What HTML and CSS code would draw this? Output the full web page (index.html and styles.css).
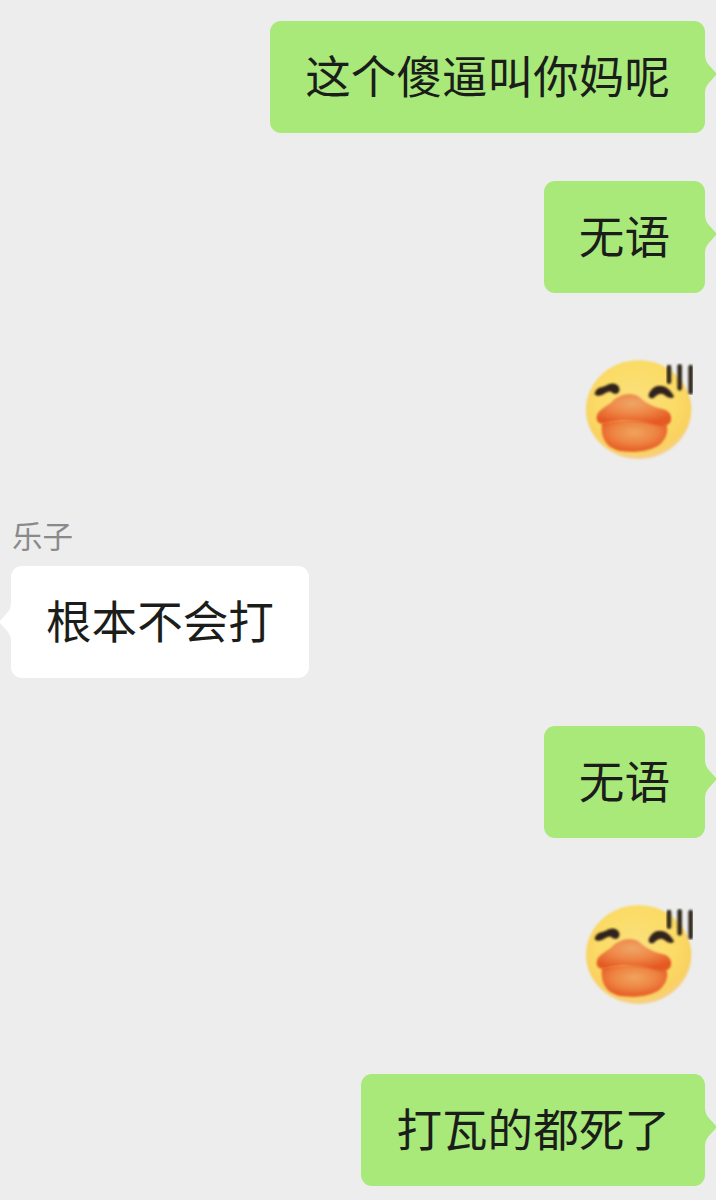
FILE: index.html
```html
<!DOCTYPE html>
<html lang="zh-CN">
<head>
<meta charset="utf-8">
<title>聊天</title>
<link rel="stylesheet" href="styles.css">
</head>
<body>
<main class="chat">
  <div class="row row-out"><div class="bubble bubble-out">这个傻逼叫你妈呢</div></div>
  <div class="row row-out gap-48"><div class="bubble bubble-out">无语</div></div>
  <div class="row row-out gap-52">
    <svg class="duck" viewBox="0 0 420 375" aria-hidden="true"><use href="#duck-face"/></svg>
  </div>
  <div class="name">乐子</div>
  <div class="row row-in"><div class="bubble bubble-in">根本不会打</div></div>
  <div class="row row-out gap-48"><div class="bubble bubble-out">无语</div></div>
  <div class="row row-out gap-52">
    <svg class="duck" viewBox="0 0 420 375" aria-hidden="true"><use href="#duck-face"/></svg>
  </div>
  <div class="row row-out gap-59"><div class="bubble bubble-out">打瓦的都死了</div></div>
</main>

<svg class="defs" width="0" height="0" aria-hidden="true">
  <defs>
    <radialGradient id="face" cx="48%" cy="40%" r="60%">
      <stop offset="0" stop-color="#fbe07c"/>
      <stop offset="0.6" stop-color="#fbdc66"/>
      <stop offset="0.88" stop-color="#f9d160"/>
      <stop offset="1" stop-color="#f6d08e"/>
    </radialGradient>
    <radialGradient id="upper" cx="48%" cy="30%" r="65%">
      <stop offset="0" stop-color="#efa668"/>
      <stop offset="0.5" stop-color="#ee8746"/>
      <stop offset="1" stop-color="#e55a24"/>
    </radialGradient>
    <radialGradient id="lower" cx="50%" cy="40%" r="60%">
      <stop offset="0" stop-color="#f0a45e"/>
      <stop offset="0.55" stop-color="#ee8442"/>
      <stop offset="1" stop-color="#e55a24"/>
    </radialGradient>
    <filter id="soft" x="-10%" y="-10%" width="120%" height="120%"><feGaussianBlur stdDeviation="2.4"/></filter>
    <filter id="softer" x="-10%" y="-10%" width="120%" height="120%"><feGaussianBlur stdDeviation="3.5"/></filter>
    <g id="duck-face">
      <ellipse cx="206" cy="194" rx="158" ry="148" fill="url(#face)" filter="url(#softer)"/>
      <path d="M96 234 C90 276 108 310 152 318 C196 324 248 318 272 296 C292 278 296 254 288 234 C240 222 150 222 96 234Z" fill="url(#lower)" filter="url(#soft)"/>
      <path d="M80 216 C82 194 108 186 126 170 C146 150 180 138 208 156 C228 174 250 186 278 192 C298 196 308 214 302 230 C296 244 270 244 244 236 C206 226 150 224 120 232 C100 240 78 238 80 216Z" fill="url(#upper)" filter="url(#soft)"/>
      <path d="M76 140 C84 124 102 128 116 118 C132 110 152 120 148 138 C142 152 130 146 122 140 C110 138 96 156 82 152 C74 150 72 146 76 140Z" fill="#33241a" filter="url(#soft)"/>
      <path d="M236 148 C244 128 262 118 280 124 C294 128 306 142 312 154 C308 164 292 158 280 148 C268 142 258 152 250 160 C240 162 234 156 236 148Z" fill="#33241a" filter="url(#soft)"/>
      <g stroke="#33291f" stroke-width="14" stroke-linecap="round" filter="url(#soft)">
        <line x1="297" y1="66" x2="297" y2="110"/>
        <line x1="329" y1="64" x2="329" y2="130"/>
        <line x1="362" y1="66" x2="362" y2="142"/>
      </g>
    </g>
  </defs>
</svg>
</body>
</html>
```

FILE: styles.css
```css
html, body {
  margin: 0;
  padding: 0;
  background: #ededed;
}

body {
  width: 716px;
  height: 1200px;
  overflow: hidden;
  font-family: "Noto Sans CJK SC", "Liberation Sans", sans-serif;
}

.chat {
  display: flex;
  flex-direction: column;
  padding: 21px 11px 0;
}

.row {
  display: flex;
}

.row-out {
  justify-content: flex-end;
}

.row-in {
  justify-content: flex-start;
}

.gap-48 {
  margin-top: 48px;
}

.gap-52 {
  margin-top: 52px;
}

.gap-59 {
  margin-top: 59px;
}

.bubble {
  position: relative;
  height: 112px;
  box-sizing: border-box;
  padding: 0 35px 5px;
  display: flex;
  align-items: center;
  border-radius: 11px;
  font-size: 45.6px;
  line-height: 1;
  color: #1b1d1a;
  white-space: nowrap;
}

.bubble::after {
  content: "";
  position: absolute;
  width: 12px;
  height: 36px;
  background: inherit;
}

.bubble-out {
  background: #a8e97a;
}

.bubble-out::after {
  top: 35px;
  left: 100%;
  clip-path: path("M0 0 Q0.5 5 3 8 L11.5 17.5 Q12 18 11.5 18.5 L3 28 Q0.5 31 0 36 Z");
}

.bubble-in {
  background: #ffffff;
}

.bubble-in::after {
  top: 38px;
  right: 100%;
  clip-path: path("M12 0 Q11.5 5 9 8 L0.5 17.5 Q0 18 0.5 18.5 L9 28 Q11.5 31 12 36 Z");
}

.duck {
  display: block;
  width: 140px;
  height: 125px;
  margin-right: -5px;
}

.defs {
  position: absolute;
}

.name {
  margin: 47px 0 0 1px;
  height: 49px;
  font-size: 30.5px;
  line-height: 36px;
  color: #8a8a8a;
}
```
